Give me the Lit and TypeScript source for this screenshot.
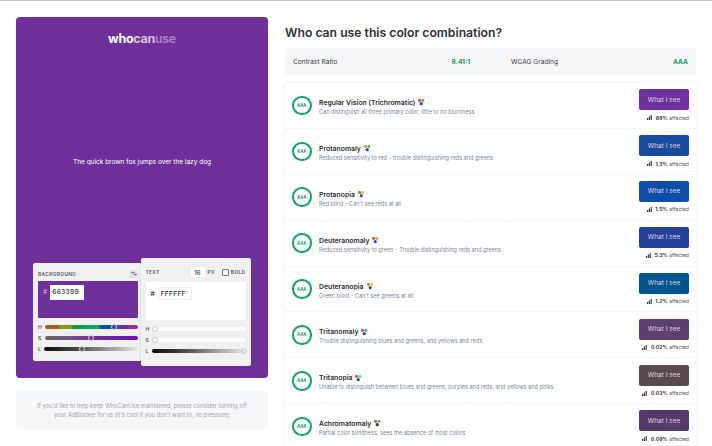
import { LitElement, html, css, svg } from "lit";
import { customElement } from "lit/decorators.js";

const rows = [
  { name: "Regular Vision (Trichromatic)", desc: "Can distinguish all three primary color, little to no blurriness", btn: "#7030a0", pct: "68%", dots: ["#f0302a", "#35c04a", "#2b3fe0"] },
  { name: "Protanomaly", desc: "Reduced sensitivity to red - trouble distinguishing reds and greens", btn: "#1a4a9e", pct: "1.3%", dots: ["#d09a1a", "#3cc04a", "#2b3fe0"] },
  { name: "Protanopia", desc: "Red blind - Can't see reds at all", btn: "#0b4fa8", pct: "1.5%", dots: ["#8a7a20", "#d2b92a", "#2b3fe0"] },
  { name: "Deuteranomaly", desc: "Reduced sensitivity to green - Trouble distinguishing reds and greens", btn: "#24419b", pct: "5.3%", dots: ["#e0452a", "#b5b52e", "#2b3fe0"] },
  { name: "Deuteranopia", desc: "Green blind - Can't see greens at all", btn: "#01558f", pct: "1.2%", dots: ["#a58a20", "#e6c030", "#2b3fe0"] },
  { name: "Tritanomaly", desc: "Trouble distinguishing blues and greens, and yellows and reds", btn: "#5e3f70", pct: "0.02%", dots: ["#f0363a", "#2fb8aa", "#274a8c"] },
  { name: "Tritanopia", desc: "Unable to distinguish between blues and greens, purples and reds, and yellows and pinks", btn: "#574b50", pct: "0.03%", dots: ["#f0322d", "#3cd8f0", "#1f4a55"] },
  { name: "Achromatomaly", desc: "Partial color blindness, sees the absence of most colors", btn: "#533a68", pct: "0.09%", dots: ["#a5603a", "#7f9a70", "#33304a"] },
];

@customElement("app-root")
export class AppRoot extends LitElement {
  static styles = css`
    :host {
      display: block;
      height: 446px;
      overflow: hidden;
      background: #fff;
      border-top: 1px solid #c4c4c4;
      box-sizing: border-box;
      font-family: Inter, "Noto Sans", sans-serif;
    }
    .page {
      display: flex;
      padding: 16px 16px 0;
      gap: 17px;
    }
    .left {
      width: 252px;
      flex: none;
    }
    .preview {
      height: 361px;
      background: #6f309b;
      border-radius: 4px;
      display: flex;
      flex-direction: column;
      align-items: center;
      color: #fff;
      padding: 15px 17px 12px;
      box-sizing: border-box;
    }
    .logo {
      font-size: 12.5px;
      font-weight: 700;
      letter-spacing: -0.3px;
      line-height: 14px;
    }
    .logo .can {
      opacity: 0.7;
    }
    .logo .use {
      opacity: 0.4;
      font-weight: 600;
    }
    .sample {
      font-size: 6.5px;
      margin-top: 111px;
      line-height: 10px;
    }
    .cards {
      margin-top: auto;
      width: 100%;
      display: flex;
      align-items: center;
    }
    .card {
      background: #f0f0f1;
      border-radius: 2px;
      box-sizing: border-box;
      color: #3a3a40;
    }
    .bg-card {
      width: 109px;
      height: 98px;
      padding: 3px 4px 4px 5px;
      flex: none;
    }
    .fg-card {
      width: 110px;
      height: 108px;
      padding: 4px 5px;
      margin-left: -1.5px;
      flex: none;
      position: relative;
      box-shadow: 0 1px 3px rgba(0, 0, 0, 0.12);
    }
    .head {
      display: flex;
      align-items: center;
      height: 15px;
      font-size: 4.8px;
      font-weight: 600;
      letter-spacing: 0.4px;
      color: #55555c;
    }
    .fg-card .head {
      height: 20px;
    }
    .swap {
      margin-left: auto;
      width: 8px;
      height: 8px;
      background: #e4e4e6;
      border-radius: 1px;
      display: flex;
      align-items: center;
      justify-content: center;
    }
    .size {
      margin-left: auto;
      width: 14px;
      height: 10px;
      background: #fff;
      color: #333;
      font-size: 6px;
      font-weight: 500;
      letter-spacing: 0;
      display: flex;
      align-items: center;
      justify-content: center;
    }
    .px {
      margin-left: 3px;
    }
    .check {
      width: 5px;
      height: 5px;
      background: #fff;
      border: 0.6px solid #777;
      border-radius: 1px;
      margin-left: 7px;
      margin-right: 2px;
    }
    .swatch {
      height: 37px;
      border-radius: 1px;
      display: flex;
      align-items: flex-start;
      gap: 3px;
      padding: 4px 5px;
      box-sizing: border-box;
    }
    .bg-swatch {
      background: #6f309b;
      color: #b795cf;
    }
    .fg-swatch {
      height: 38px;
      background: #fff;
      color: #444;
      padding-top: 5px;
    }
    .hash {
      font-size: 6.5px;
      line-height: 14px;
      font-weight: 600;
    }
    .hex {
      background: #fff;
      color: #333;
      width: 34px;
      height: 15px;
      box-sizing: border-box;
      padding-left: 2px;
      font-size: 6.6px;
      line-height: 14px;
      font-weight: 500;
      letter-spacing: 0.3px;
    }
    .fg-swatch .hex {
      height: 13px;
      line-height: 12px;
      border: 0.5px solid #f0f0f0;
    }
    .slider {
      display: flex;
      align-items: center;
      gap: 3.5px;
      height: 11px;
      font-size: 5.2px;
      font-weight: 600;
      color: #55555c;
    }
    .sliders {
      margin-top: 3.5px;
    }
    .fg-card .sliders {
      margin-top: 3px;
    }
    .track {
      flex: 1;
      height: 4px;
      border-radius: 2px;
      position: relative;
    }
    .thumb {
      position: absolute;
      top: -1px;
      width: 4px;
      height: 4px;
      border-radius: 50%;
      border: 1px solid #ccccd2;
      margin-left: -3px;
      background: transparent;
    }
    .notice {
      margin-top: 13px;
      height: 38px;
      border-radius: 4px;
      background: #f6f7f9;
      color: #a2a4aa;
      font-size: 5.76px;
      line-height: 8.7px;
      text-align: center;
      padding-top: 11px;
      box-sizing: border-box;
    }
    .right {
      flex: 1;
      min-width: 0;
    }
    h1 {
      margin: 0;
      font-size: 12.2px;
      line-height: 16px;
      font-weight: 600;
      color: #2f2f35;
      padding-top: 8px;
    }
    .stats {
      margin-top: 7px;
      height: 27px;
      background: #f6f7f9;
      border-radius: 3px;
      display: grid;
      grid-template-columns: 1fr 1fr;
      column-gap: 41px;
      padding: 0 8px;
      align-items: center;
      font-size: 6.6px;
      color: #3c3c42;
    }
    .stat {
      display: flex;
      justify-content: space-between;
    }
    .good {
      color: #0d9f5f;
      font-weight: 700;
    }
    .list {
      margin-top: 8px;
      border-radius: 4px;
      box-shadow: 0 0 4px rgba(0, 0, 0, 0.09);
    }
    .row {
      height: 45.9px;
      display: flex;
      align-items: center;
      padding: 0 7px;
      box-sizing: border-box;
      border-bottom: 1px dashed #f2f2f4;
    }
    .badge {
      width: 15.5px;
      height: 15.5px;
      border: 2px solid #0ea36a;
      border-radius: 50%;
      color: #0ea36a;
      font-size: 4.2px;
      font-weight: 700;
      display: flex;
      align-items: center;
      justify-content: center;
      flex: none;
    }
    .info {
      margin-left: 7.5px;
      flex: 1;
      padding-top: 3px;
    }
    .name {
      font-size: 6.85px;
      line-height: 11px;
      font-weight: 600;
      color: #2b2b31;
      display: flex;
      align-items: center;
      gap: 3px;
    }
    .desc {
      font-size: 5.55px;
      line-height: 9px;
      color: #7d86a0;
    }
    .side {
      width: 50px;
      display: flex;
      flex-direction: column;
      align-items: flex-end;
    }
    .btn {
      width: 50px;
      height: 21px;
      border-radius: 2px;
      color: #d9d4e0;
      font-size: 6.5px;
      display: flex;
      align-items: center;
      justify-content: center;
    }
    .pct {
      margin-top: 3.5px;
      font-size: 5.1px;
      line-height: 8px;
      color: #555;
      display: flex;
      align-items: center;
      gap: 1.5px;
      white-space: nowrap;
    }
    .pct b {
      font-weight: 700;
      color: #3a3a40;
      margin-left: 2px;
    }
  `;

  private dots(c: string[]) {
    return html`<svg width="6.5" height="6.5" viewBox="0 0 7 7">
      ${svg`<circle cx="1.7" cy="1.7" r="1.6" fill=${c[0]}></circle>
      <circle cx="5.3" cy="1.7" r="1.6" fill=${c[1]}></circle>
      <circle cx="3.5" cy="5" r="1.7" fill=${c[2]}></circle>`}
    </svg>`;
  }

  private slider(label: string, bg: string, pos: number) {
    return html`<div class="slider">
      <span>${label}</span>
      <div class="track" style="background:${bg}">
        <div class="thumb" style="left:${pos}%"></div>
      </div>
    </div>`;
  }

  render() {
    return html`
      <div class="page">
        <div class="left">
          <div class="preview">
            <div class="logo">who<span class="can">can</span><span class="use">use</span></div>
            <div class="sample">The quick brown fox jumps over the lazy dog</div>
            <div class="cards">
              <div class="card bg-card">
                <div class="head">
                  BACKGROUND
                  <span class="swap">
                    <svg width="6" height="5" viewBox="0 0 6 5" fill="none" stroke="#555" stroke-width="0.6">
                      <path d="M0.5 1.5H4M1.5 0.5L0.5 1.5L1.5 2.5M5.5 3.5H2M4.5 2.5L5.5 3.5L4.5 4.5" />
                    </svg>
                  </span>
                </div>
                <div class="swatch bg-swatch">
                  <span class="hash">#</span>
                  <span class="hex">663399</span>
                </div>
                <div class="sliders">
                  ${this.slider("H", "linear-gradient(90deg,#a85a22 0 15%,#7f9a16 16% 29%,#109a30 30% 40%,#0ca36a 41% 57%,#0a50a8 60% 74%,#6a2fa5 80% 86%,#9a2b8e 90%)", 74.5)}
                  ${this.slider("S", "linear-gradient(90deg,#66666a 0%,#6f5a80 25%,#6f309b 50%,#6a14b8 100%)", 50)}
                  ${this.slider("L", "linear-gradient(90deg,#0c0c0c 0%,#555 40%,#aaa 75%,#e8e8ea 100%)", 40)}
                </div>
              </div>
              <div class="card fg-card">
                <div class="head">
                  TEXT
                  <span class="size">16</span>
                  <span class="px">PX</span>
                  <span class="check"></span>
                  BOLD
                </div>
                <div class="swatch fg-swatch">
                  <span class="hash">#</span>
                  <span class="hex">FFFFFF</span>
                </div>
                <div class="sliders">
                  ${this.slider("H", "#fff", 2.5)}
                  ${this.slider("S", "#fff", 2.5)}
                  ${this.slider("L", "linear-gradient(90deg,#0c0c0c 0%,#333 25%,#888 60%,#e8e8ea 100%)", 98)}
                </div>
              </div>
            </div>
          </div>
          <div class="notice">
            If you'd like to help keep WhoCanUse maintained, please consider turning off<br />
            your AdBlocker for us (it's cool if you don't want to, no pressure)
          </div>
        </div>
        <div class="right">
          <h1>Who can use this color combination?</h1>
          <div class="stats">
            <div class="stat"><span>Contrast Ratio</span><span class="good">8.41:1</span></div>
            <div class="stat"><span>WCAG Grading</span><span class="good">AAA</span></div>
          </div>
          <div class="list">
            ${rows.map(
              (r) => html`<div class="row">
                <div class="badge">AAA</div>
                <div class="info">
                  <div class="name">${r.name} ${this.dots(r.dots)}</div>
                  <div class="desc">${r.desc}</div>
                </div>
                <div class="side">
                  <div class="btn" style="background:${r.btn}">What I see</div>
                  <div class="pct">
                    <svg width="5" height="5" viewBox="0 0 5 5" fill="#3a3a40">
                      <rect x="0" y="3" width="1.2" height="2"></rect>
                      <rect x="1.8" y="1.5" width="1.2" height="3.5"></rect>
                      <rect x="3.6" y="0" width="1.2" height="5"></rect>
                    </svg>
                    <b>${r.pct}</b> affected
                  </div>
                </div>
              </div>`
            )}
          </div>
        </div>
      </div>
    `;
  }
}
